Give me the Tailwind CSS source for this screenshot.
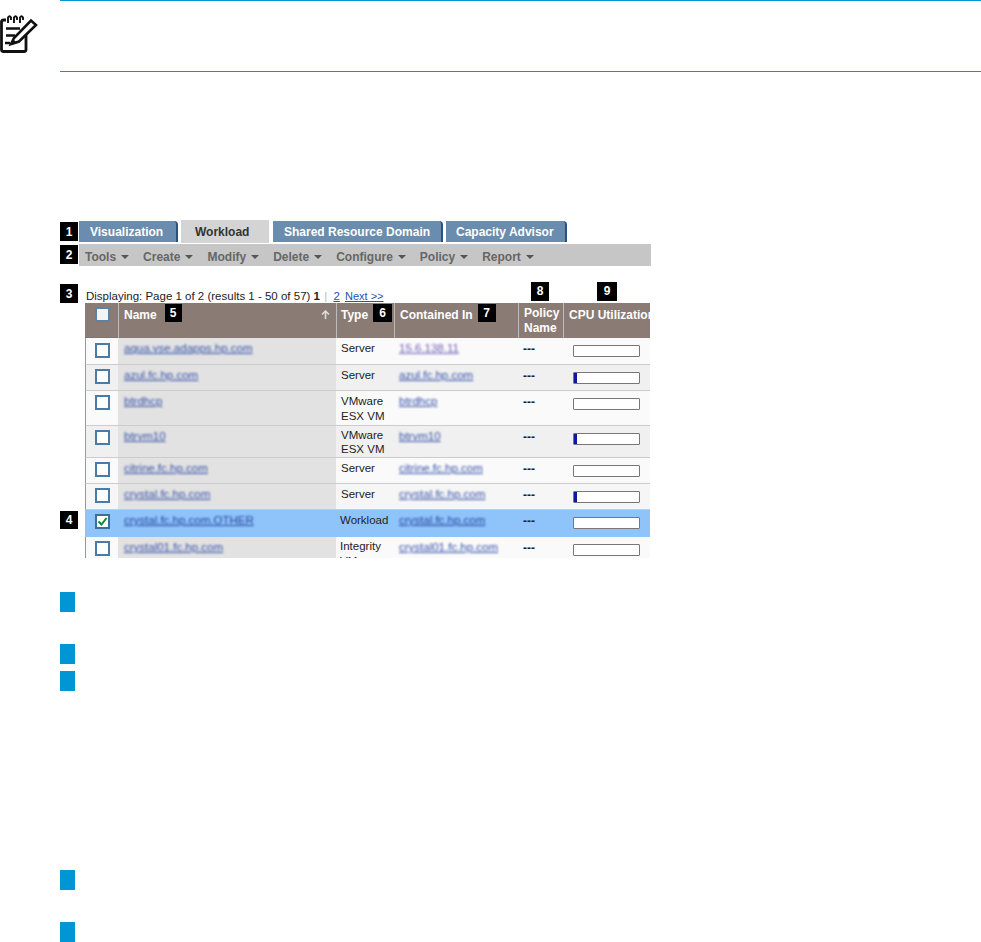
<!DOCTYPE html>
<html><head><meta charset="utf-8"><script src="https://cdn.jsdelivr.net/npm/@tailwindcss/browser@4"></script></head>
<body class="bg-white font-['Liberation_Sans',Arial,sans-serif] overflow-hidden">
<div class="w-[981px] h-[942px] overflow-hidden relative">
<!-- Note -->
<div class="flex h-[72px]">
  <div class="w-[60px] shrink-0 pt-[14px]">
    <svg width="38" height="40" viewBox="0 0 38 40" fill="none" stroke="#111">
      <path d="M6 6H3.500Q1.500 6 1.500 8V35.500Q1.500 37.500 3.500 37.500H24Q26 37.500 26 35.500V20" stroke-width="2.800"/>
      <path d="M8 9V3.500Q9.500 1 11 3.500V6M14 9V3.500Q15.500 1 17 3.500V6M20 9V3.500Q21.500 1 23 3.500V6" stroke-width="1.900"/>
      <path d="M6 14.500H20M6 21.500H15M5 29H10" stroke-width="2.600"/>
      <path d="M11 30L14 24L31 6.500L36 11L19 27.500Z" fill="#fff" stroke-width="2.600"/>
      <path d="M10 31L13 25L17 29Z" fill="#111" stroke="none"/>
    </svg>
  </div>
  <div class="flex-1 border-t border-b border-[#0096d6]"></div>
</div>
<!-- Figure -->
<div class="ml-[60px] mt-[148px] w-[591px] flex flex-col">
  <div class="flex h-[22px] items-start">
    <span class="w-[18px] h-[19px] mt-[2px] bg-black text-white text-[12px] font-bold flex items-center justify-center">1</span>
    <div class="flex items-end h-full ml-px gap-[3px] text-[12px] font-bold">
      <span class="h-[21px] w-[99px] bg-[#6a8cae] text-white rounded-tr-[4px] border-r-2 border-[#2a527c] pl-[11px] pt-[2px]">Visualization</span>
      <span class="h-[23px] w-[88px] bg-[#d4d4d4] text-[#333] pl-[14px] pt-[3px] -mb-px">Workload</span>
      <span class="h-[21px] w-[170px] ml-[1px] bg-[#6a8cae] text-white rounded-tr-[4px] border-r-2 border-[#2a527c] pl-[11px] pt-[2px]">Shared Resource Domain</span>
      <span class="h-[21px] w-[121px] bg-[#6a8cae] text-white rounded-tr-[4px] border-r-2 border-[#2a527c] pl-[10px] pt-[2px]">Capacity Advisor</span>
    </div>
  </div>
  <div class="flex h-[22px] mt-[2px] items-start">
    <span class="w-[18px] h-[19px] mt-px bg-black text-white text-[12px] font-bold flex items-center justify-center">2</span>
    <div class="flex-1 ml-px h-full bg-[#c6c6c6] flex items-center pt-[3px] pl-[6px] gap-[14px] text-[12px] font-bold text-[#666]">
      <span class="flex items-center gap-[5px]">Tools <svg width="8" height="4" viewBox="0 0 8 4"><path d="M0 0H8L4 4Z" fill="#555"/></svg></span>
      <span class="flex items-center gap-[5px]">Create <svg width="8" height="4" viewBox="0 0 8 4"><path d="M0 0H8L4 4Z" fill="#555"/></svg></span>
      <span class="flex items-center gap-[5px]">Modify <svg width="8" height="4" viewBox="0 0 8 4"><path d="M0 0H8L4 4Z" fill="#555"/></svg></span>
      <span class="flex items-center gap-[5px]">Delete <svg width="8" height="4" viewBox="0 0 8 4"><path d="M0 0H8L4 4Z" fill="#555"/></svg></span>
      <span class="flex items-center gap-[5px]">Configure <svg width="8" height="4" viewBox="0 0 8 4"><path d="M0 0H8L4 4Z" fill="#555"/></svg></span>
      <span class="flex items-center gap-[5px]">Policy <svg width="8" height="4" viewBox="0 0 8 4"><path d="M0 0H8L4 4Z" fill="#555"/></svg></span>
      <span class="flex items-center gap-[5px]">Report <svg width="8" height="4" viewBox="0 0 8 4"><path d="M0 0H8L4 4Z" fill="#555"/></svg></span>
    </div>
  </div>
  <div class="flex h-[37px]">
    <div class="w-[18px] pt-[18px]"><span class="w-[18px] h-[19px] bg-black text-white text-[12px] font-bold flex items-center justify-center">3</span></div>
    <div class="flex-1 ml-[8px] pt-[24px] flex items-start justify-between text-[11.500px] leading-[13px] text-[#222]">
      <span class="whitespace-nowrap">Displaying: Page 1 of 2 (results 1 - 50 of 57) <b>1</b> <span class="text-[#bbb] mx-[1px]">|</span> <span class="text-[#2a4fb0] underline mx-[2px]">2</span> <span class="text-[#2a4fb0] underline text-[11px]">Next &gt;&gt;</span></span>
      <div class="flex gap-[48px] mr-[34px] -mt-[8px]">
        <span class="w-[18px] h-[19px] bg-black text-white text-[12px] font-bold flex items-center justify-center">8</span>
        <span class="w-[20px] h-[19px] bg-black text-white text-[12px] font-bold flex items-center justify-center">9</span>
      </div>
    </div>
  </div>
  <div class="ml-[25px] grid grid-cols-[33px_218px_58px_124px_45px_87px] grid-rows-[35px_27px_26px_35px_32px_26px_26px_27px_21px] h-[255px] overflow-hidden text-[11.500px] text-[#222]">
    <!-- header -->
    <div class="bg-[#8a7c75] border-b border-[#777] pl-[10px] pt-[4px]"><span class="block w-[15px] h-[15px] border-2 border-[#5b83a8] bg-[#f4f4f4]"></span></div>
    <div class="bg-[#8a7c75] border-l border-[#bbb] pl-[5px] pt-[3px] flex items-start font-bold text-white text-[12px]"><span>Name</span><span class="w-[17px] h-[18px] bg-black ml-[8px] -mt-[2px] flex items-center justify-center">5</span><svg class="ml-auto mr-[6px] mt-[4px]" width="9" height="9" viewBox="0 0 9 9" fill="none" stroke="#ddd" stroke-width="1.600"><path d="M4.500 9V1M1 4.500L4.500 1L8 4.500"/></svg></div>
    <div class="bg-[#8a7c75] border-l border-[#bbb] pl-[4px] pt-[3px] flex items-start font-bold text-white text-[12px]"><span>Type</span><span class="w-[19px] h-[18px] bg-black ml-[5px] -mt-[2px] flex items-center justify-center">6</span></div>
    <div class="bg-[#8a7c75] border-l border-[#bbb] pl-[5px] pt-[3px] flex items-start font-bold text-white text-[12px]"><span>Contained In</span><span class="w-[18px] h-[18px] bg-black ml-[5px] -mt-[2px] flex items-center justify-center">7</span></div>
    <div class="bg-[#8a7c75] border-l border-[#bbb] pl-[5px] pt-[3px] font-bold text-white text-[12px] leading-[15px]">Policy<br>Name</div>
    <div class="bg-[#8a7c75] border-l border-[#bbb] pl-[5px] pt-[3px] font-bold text-white text-[12px] whitespace-nowrap overflow-hidden">CPU Utilization</div>

    <!-- row 1 -->
    <div class="border-l border-b border-l-[#999] border-b-[#ccc] pl-[9px] pt-[5px] bg-[#fafafa]"><span class="block w-[15px] h-[15px] border-2 border-[#4a7ba6] bg-white"></span></div>
    <div class="bg-[#e2e2e2] border-b border-[#ccc] pl-[6px] pt-[2px]"><span class="text-[#3450a8] underline blur-[1px]">aqua.vse.adapps.hp.com</span></div>
    <div class="bg-[#fafafa] border-b border-[#ccc] pl-[5px] pt-[2px]">Server</div>
    <div class="bg-[#fafafa] border-b border-[#ccc] pl-[5px] pt-[2px]"><span class="text-[#7060b8] underline blur-[1px]">15.6.138.11</span></div>
    <div class="bg-[#fafafa] border-b border-[#ccc] pl-[5px] pt-[2px] font-bold text-[12px]">---</div>
    <div class="bg-[#fafafa] border-b border-[#ccc] pl-[10px] pt-[7px]"><span class="block w-[67px] h-[12px] border border-[#777] rounded-[1px] bg-white"></span></div>

    <!-- row 2 -->
    <div class="border-l border-b border-l-[#999] border-b-[#ccc] pl-[9px] pt-[4px] bg-[#f0f0f0]"><span class="block w-[15px] h-[15px] border-2 border-[#4a7ba6] bg-white"></span></div>
    <div class="bg-[#e2e2e2] border-b border-[#ccc] pl-[6px] pt-[2px]"><span class="text-[#3450a8] underline blur-[1px]">azul.fc.hp.com</span></div>
    <div class="bg-[#f0f0f0] border-b border-[#ccc] pl-[5px] pt-[2px]">Server</div>
    <div class="bg-[#f0f0f0] border-b border-[#ccc] pl-[5px] pt-[2px]"><span class="text-[#3450a8] underline blur-[1px]">azul.fc.hp.com</span></div>
    <div class="bg-[#f0f0f0] border-b border-[#ccc] pl-[5px] pt-[2px] font-bold text-[12px]">---</div>
    <div class="bg-[#f0f0f0] border-b border-[#ccc] pl-[10px] pt-[7px]"><span class="block w-[67px] h-[12px] border border-[#777] rounded-[1px] bg-white"><span class="block w-[3px] h-full bg-[#0a1a9a]"></span></span></div>

    <!-- row 3 -->
    <div class="border-l border-b border-l-[#999] border-b-[#ccc] pl-[9px] pt-[4px] bg-[#fafafa]"><span class="block w-[15px] h-[15px] border-2 border-[#4a7ba6] bg-white"></span></div>
    <div class="bg-[#e2e2e2] border-b border-[#ccc] pl-[6px] pt-[2px]"><span class="text-[#3450a8] underline blur-[1px]">btrdhcp</span></div>
    <div class="bg-[#fafafa] border-b border-[#ccc] pl-[5px] pt-[3px] leading-[15px]">VMware<br>ESX VM</div>
    <div class="bg-[#fafafa] border-b border-[#ccc] pl-[5px] pt-[2px]"><span class="text-[#3450a8] underline blur-[1px]">btrdhcp</span></div>
    <div class="bg-[#fafafa] border-b border-[#ccc] pl-[5px] pt-[2px] font-bold text-[12px]">---</div>
    <div class="bg-[#fafafa] border-b border-[#ccc] pl-[10px] pt-[7px]"><span class="block w-[67px] h-[12px] border border-[#777] rounded-[1px] bg-white"></span></div>

    <!-- row 4 -->
    <div class="border-l border-b border-l-[#999] border-b-[#ccc] pl-[9px] pt-[4px] bg-[#f0f0f0]"><span class="block w-[15px] h-[15px] border-2 border-[#4a7ba6] bg-white"></span></div>
    <div class="bg-[#e2e2e2] border-b border-[#ccc] pl-[6px] pt-[2px]"><span class="text-[#3450a8] underline blur-[1px]">btrvm10</span></div>
    <div class="bg-[#f0f0f0] border-b border-[#ccc] pl-[5px] pt-[2px] leading-[14px]">VMware<br>ESX VM</div>
    <div class="bg-[#f0f0f0] border-b border-[#ccc] pl-[5px] pt-[2px]"><span class="text-[#3450a8] underline blur-[1px]">btrvm10</span></div>
    <div class="bg-[#f0f0f0] border-b border-[#ccc] pl-[5px] pt-[2px] font-bold text-[12px]">---</div>
    <div class="bg-[#f0f0f0] border-b border-[#ccc] pl-[10px] pt-[7px]"><span class="block w-[67px] h-[12px] border border-[#777] rounded-[1px] bg-white"><span class="block w-[3px] h-full bg-[#0a1a9a]"></span></span></div>

    <!-- row 5 -->
    <div class="border-l border-b border-l-[#999] border-b-[#ccc] pl-[9px] pt-[4px] bg-[#fafafa]"><span class="block w-[15px] h-[15px] border-2 border-[#4a7ba6] bg-white"></span></div>
    <div class="bg-[#e2e2e2] border-b border-[#ccc] pl-[6px] pt-[2px]"><span class="text-[#3450a8] underline blur-[1px]">citrine.fc.hp.com</span></div>
    <div class="bg-[#fafafa] border-b border-[#ccc] pl-[5px] pt-[2px]">Server</div>
    <div class="bg-[#fafafa] border-b border-[#ccc] pl-[5px] pt-[2px]"><span class="text-[#3450a8] underline blur-[1px]">citrine.fc.hp.com</span></div>
    <div class="bg-[#fafafa] border-b border-[#ccc] pl-[5px] pt-[2px] font-bold text-[12px]">---</div>
    <div class="bg-[#fafafa] border-b border-[#ccc] pl-[10px] pt-[7px]"><span class="block w-[67px] h-[12px] border border-[#777] rounded-[1px] bg-white"></span></div>

    <!-- row 6 -->
    <div class="border-l border-b border-l-[#999] border-b-[#ccc] pl-[9px] pt-[4px] bg-[#f6f6f6]"><span class="block w-[15px] h-[15px] border-2 border-[#4a7ba6] bg-white"></span></div>
    <div class="bg-[#e2e2e2] border-b border-[#ccc] pl-[6px] pt-[2px]"><span class="text-[#3450a8] underline blur-[1px]">crystal.fc.hp.com</span></div>
    <div class="bg-[#f6f6f6] border-b border-[#ccc] pl-[5px] pt-[2px]">Server</div>
    <div class="bg-[#f6f6f6] border-b border-[#ccc] pl-[5px] pt-[2px]"><span class="text-[#3450a8] underline blur-[1px]">crystal.fc.hp.com</span></div>
    <div class="bg-[#f6f6f6] border-b border-[#ccc] pl-[5px] pt-[2px] font-bold text-[12px]">---</div>
    <div class="bg-[#f6f6f6] border-b border-[#ccc] pl-[10px] pt-[7px]"><span class="block w-[67px] h-[12px] border border-[#777] rounded-[1px] bg-white"><span class="block w-[3px] h-full bg-[#0a1a9a]"></span></span></div>

    <!-- row 7 selected -->
    <div class="bg-[#8fc4fb] pl-[10px] pt-[4px]"><span class="flex items-center justify-center w-[15px] h-[15px] border-2 border-[#3c6e9c] bg-white"><svg width="11" height="11" viewBox="0 0 11 11" fill="none" stroke="#0a8a2a" stroke-width="2"><path d="M1.500 5.500L4.500 8.500L9.500 2"/></svg></span></div>
    <div class="bg-[#8fc4fb] pl-[6px] pt-[2px]"><span class="text-[#23409a] underline blur-[1px]">crystal.fc.hp.com.OTHER</span></div>
    <div class="bg-[#8fc4fb] pl-[4px] pt-[2px]">Workload</div>
    <div class="bg-[#8fc4fb] pl-[5px] pt-[2px]"><span class="text-[#23409a] underline blur-[1px]">crystal.fc.hp.com</span></div>
    <div class="bg-[#8fc4fb] pl-[5px] pt-[2px] font-bold text-[12px]">---</div>
    <div class="bg-[#8fc4fb] pl-[10px] pt-[7px]"><span class="block w-[67px] h-[12px] border border-[#777] rounded-[1px] bg-white"></span></div>

    <!-- row 8 cropped -->
    <div class="border-l border-[#999] pl-[9px] pt-[4px] bg-[#fafafa]"><span class="block w-[15px] h-[15px] border-2 border-[#4a7ba6] bg-white"></span></div>
    <div class="bg-[#e2e2e2] pl-[6px] pt-[2px]"><span class="text-[#3450a8] underline blur-[1px]">crystal01.fc.hp.com</span></div>
    <div class="bg-[#fafafa] pl-[4px] pt-[2px] leading-[15px]">Integrity<br>VM</div>
    <div class="bg-[#fafafa] pl-[5px] pt-[2px]"><span class="text-[#3450a8] underline blur-[1px]">crystal01.fc.hp.com</span></div>
    <div class="bg-[#fafafa] pl-[5px] pt-[2px] font-bold text-[12px]">---</div>
    <div class="bg-[#fafafa] pl-[10px] pt-[7px]"><span class="block w-[67px] h-[12px] border border-[#777] rounded-[1px] bg-white"></span></div>
  </div>
  <span class="absolute left-[60px] top-[511px] w-[18px] h-[18px] bg-black text-white text-[12px] font-bold flex items-center justify-center">4</span>
</div>
<!-- Legend markers -->
<div class="absolute left-[60px] top-[592px] w-[15px] h-[20px] bg-[#0096d6]"></div>
<div class="absolute left-[60px] top-[644px] w-[15px] h-[20px] bg-[#0096d6]"></div>
<div class="absolute left-[60px] top-[671px] w-[15px] h-[20px] bg-[#0096d6]"></div>
<div class="absolute left-[60px] top-[870px] w-[15px] h-[20px] bg-[#0096d6]"></div>
<div class="absolute left-[60px] top-[922px] w-[15px] h-[20px] bg-[#0096d6]"></div>
</div>
</body></html>
